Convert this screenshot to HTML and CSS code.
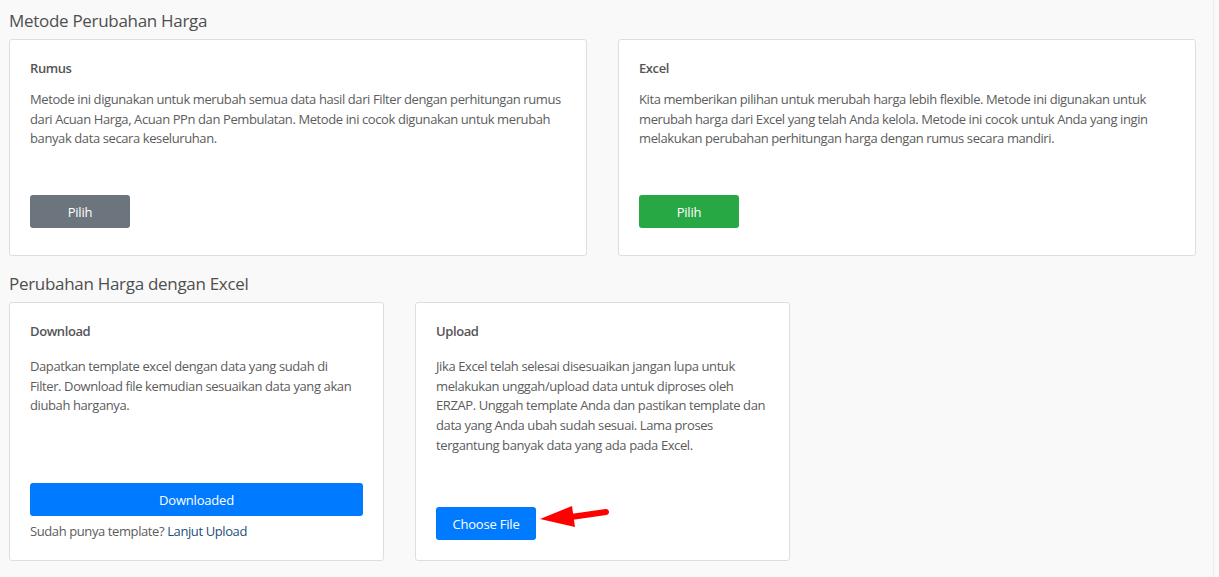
FILE: index.html
```html
<!DOCTYPE html>
<html lang="id">
<head>
<meta charset="utf-8">
<title>Metode Perubahan Harga</title>
<link rel="stylesheet" href="styles.css">
</head>
<body>
<div class="page">
  <h2 class="section-title">Metode Perubahan Harga</h2>
  <div class="row row-top">
    <div class="card card-top">
      <h3 class="card-title">Rumus</h3>
      <p class="card-text">Metode ini digunakan untuk merubah semua data hasil dari Filter dengan perhitungan rumus dari Acuan Harga, Acuan PPn dan Pembulatan. Metode ini cocok digunakan untuk merubah banyak data secara keseluruhan.</p>
      <button class="btn btn-secondary">Pilih</button>
    </div>
    <div class="card card-top">
      <h3 class="card-title">Excel</h3>
      <p class="card-text">Kita memberikan pilihan untuk merubah harga lebih flexible. Metode ini digunakan untuk merubah harga dari Excel yang telah Anda kelola. Metode ini cocok untuk Anda yang ingin melakukan perubahan perhitungan harga dengan rumus secara mandiri.</p>
      <button class="btn btn-success">Pilih</button>
    </div>
  </div>

  <h2 class="section-title section-title-2">Perubahan Harga dengan Excel</h2>
  <div class="row row-bottom">
    <div class="card card-bottom card-download">
      <h3 class="card-title">Download</h3>
      <p class="card-text card-text-b card-text-download">Dapatkan template excel dengan data yang sudah di Filter. Download file kemudian sesuaikan data yang akan diubah harganya.</p>
      <button class="btn btn-primary btn-block">Downloaded</button>
      <p class="card-note">Sudah punya template? <a href="#" class="link">Lanjut Upload</a></p>
    </div>
    <div class="card card-bottom">
      <h3 class="card-title">Upload</h3>
      <p class="card-text card-text-b">Jika Excel telah selesai disesuaikan jangan lupa untuk melakukan unggah/upload data untuk diproses oleh ERZAP. Unggah template Anda dan pastikan template dan data yang Anda ubah sudah sesuai. Lama proses tergantung banyak data yang ada pada Excel.</p>
      <div class="upload-action">
        <button class="btn btn-primary">Choose File</button>
        <svg class="arrow" width="72" height="24" viewBox="0 0 72 24" aria-hidden="true">
          <line x1="33" y1="12" x2="68" y2="7" stroke="#ff0000" stroke-width="6" stroke-linecap="round"/>
          <polygon points="2,14 34,1 37,22" fill="#ff0000"/>
        </svg>
      </div>
    </div>
  </div>
</div>
</body>
</html>
```

FILE: styles.css
```css
html, body {
  margin: 0;
  padding: 0;
}
body {
  background: #f9f9f9;
  font-family: "Open Sans", "Noto Sans", "Liberation Sans", sans-serif;
  font-size: 13px;
  letter-spacing: -0.4px;
  color: #5a5a5a;
}
.page {
  width: 1204px;
  min-height: 577px;
  padding: 0 0 0 9px;
  border-right: 1px solid #ececec;
  box-sizing: content-box;
}
.section-title {
  margin: 0;
  padding-top: 10px;
  height: 39px;
  box-sizing: border-box;
  font-size: 17px;
  font-weight: 400;
  letter-spacing: -0.3px;
  line-height: 22px;
  color: #4f4f4f;
}
.section-title-2 {
  padding-top: 17px;
  height: 46px;
}
.row {
  display: flex;
  gap: 31px;
  align-items: stretch;
}
.card {
  background: #fff;
  border: 1px solid #dedede;
  border-radius: 3px;
  box-sizing: border-box;
  padding: 18px 20px 20px;
  display: flex;
  flex-direction: column;
  align-items: flex-start;
}
.card-top {
  width: 578px;
  height: 217px;
}
.card-bottom {
  width: 375px;
  height: 259px;
}
.card-download {
  padding-bottom: 19px;
}
.card-title {
  margin: 0;
  font-size: 13px;
  font-weight: 600;
  line-height: 20px;
  color: #555;
}
.card-text {
  margin: 12px 0 0;
  line-height: 19.7px;
  color: #5c5c5c;
}
.card-text-b {
  margin-top: 16px;
}
.card-text-download {
  max-width: 328px;
}
.btn {
  font-family: inherit;
  font-size: 13px;
  letter-spacing: -0.2px;
  color: #fff;
  border: none;
  border-radius: 3px;
  width: 100px;
  height: 33px;
  padding: 0;
  cursor: pointer;
}
.card-top .btn {
  margin-top: 46px;
}
.btn-secondary { background: #6c757d; }
.btn-success { background: #28a745; }
.btn-primary { background: #007bff; }
.btn-block {
  width: 100%;
  margin-top: auto;
}
.card-note {
  margin: 5px 0 0;
  line-height: 20px;
  color: #5c5c5c;
}
.link {
  color: #1f4f78;
  text-decoration: none;
}
.upload-action {
  margin-top: auto;
  position: relative;
  display: flex;
  align-items: center;
}
.arrow {
  position: absolute;
  left: 102px;
  top: -2px;
}
```
